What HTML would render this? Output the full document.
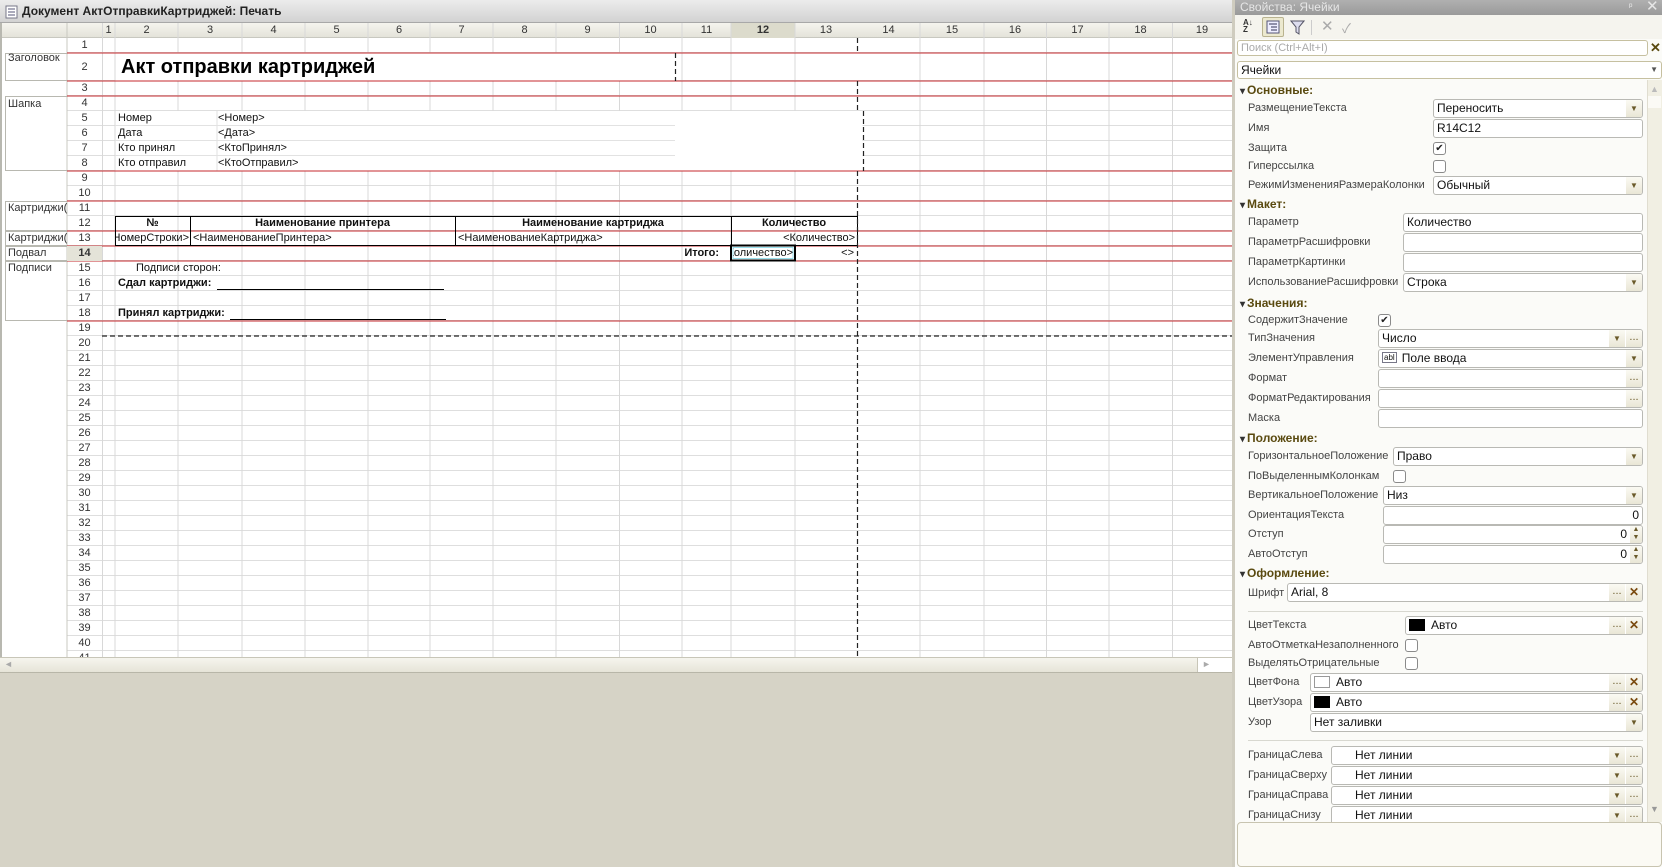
<!DOCTYPE html>
<html><head><meta charset="utf-8">
<style>
*{margin:0;padding:0;box-sizing:border-box}
body{width:1662px;height:867px;overflow:hidden;background:#d6d3c6;font-family:"Liberation Sans","Noto Sans CJK SC",sans-serif;position:relative}
.a{position:absolute;white-space:nowrap}
.s{font-size:11px;color:#111;line-height:15px}
.b{font-weight:bold}
.lab{position:absolute;left:1248px;font-size:11px;color:#444;line-height:16px;white-space:nowrap}
.hd{position:absolute;left:1240px;font-size:12px;font-weight:bold;color:#5a4a10;line-height:16px}
.hd:before{content:"▾";font-size:10px;color:#333;margin-right:2px}
.inp{position:absolute;height:19px;border:1px solid #b9b9b4;border-radius:3px;background:#fff;font-size:12px;line-height:17px;padding-left:3px;color:#111;right:19px;white-space:nowrap;overflow:hidden}
.dd{position:absolute;right:0;top:0;width:16px;height:17px;background:linear-gradient(#fbfaf3,#e9e6d6);font-size:8px;color:#6a5a2a;text-align:center;line-height:17px}
.dt{position:absolute;top:0;width:16px;height:17px;background:linear-gradient(#fbfaf3,#e9e6d6);font-size:11px;color:#6a5a2a;text-align:center;line-height:14px}
.x{position:absolute;right:0;top:0;width:16px;height:17px;background:linear-gradient(#fbfaf3,#e9e6d6);font-size:12px;font-weight:bold;color:#7a4a10;text-align:center;line-height:17px}
.cb{position:absolute;width:13px;height:13px;border:1px solid #8a8a8a;border-radius:3px;background:#fff;font-size:10px;line-height:11px;text-align:center;color:#222}
</style></head><body>
<div class="a" style="left:0;top:0;width:1232px;height:23px;background:linear-gradient(#ececec,#d2d2d2);border-bottom:1px solid #a8a8a8"></div>
<svg class="a" style="left:5px;top:5px" width="14" height="14"><rect x="1" y="1" width="11" height="12" fill="#fff" stroke="#778"/><path d="M3 4h7M3 7h7M3 10h7" stroke="#557" stroke-width="1"/></svg>
<div class="a b" style="left:22px;top:4px;font-size:12px;color:#222">Документ АктОтправкиКартриджей: Печать</div>

<div class="a" style="left:0;top:23px;width:1232px;height:634px;background:#fff;border-left:2px solid #b8b8b0"></div>
<div class="a" style="left:2px;top:23px;width:1230px;height:15px;background:linear-gradient(#f5f4ee,#e4e3da);border-bottom:1px solid #c8c8c0"></div>
<div class="a" style="left:731px;top:23px;width:64px;height:15px;background:#dcdbcc"></div>
<svg class="a" style="left:0;top:0" width="1232" height="657">
<defs><pattern id="rp" x="0" y="96" width="1232" height="15" patternUnits="userSpaceOnUse"><line x1="0" y1="14.5" x2="1232" y2="14.5" stroke="#dedede" stroke-width="1"/></pattern></defs>
<rect x="67" y="96" width="1165" height="561" fill="url(#rp)"/>
<g stroke="#dedede" stroke-width="1">
<line x1="67" y1="52.5" x2="1232" y2="52.5"/><line x1="67" y1="80.5" x2="1232" y2="80.5"/><line x1="67" y1="95.5" x2="1232" y2="95.5"/>
</g>
<g stroke="#d8d8d8" stroke-width="1">
<line x1="102.5" y1="23" x2="102.5" y2="657"/><line x1="115" y1="23" x2="115" y2="657"/><line x1="178" y1="23" x2="178" y2="657"/><line x1="242" y1="23" x2="242" y2="657"/><line x1="305" y1="23" x2="305" y2="657"/><line x1="368" y1="23" x2="368" y2="657"/><line x1="430" y1="23" x2="430" y2="657"/><line x1="493" y1="23" x2="493" y2="657"/><line x1="556" y1="23" x2="556" y2="657"/><line x1="619.5" y1="23" x2="619.5" y2="657"/><line x1="682" y1="23" x2="682" y2="657"/><line x1="731" y1="23" x2="731" y2="657"/><line x1="795" y1="23" x2="795" y2="657"/><line x1="920" y1="23" x2="920" y2="657"/><line x1="984" y1="23" x2="984" y2="657"/><line x1="1046.5" y1="23" x2="1046.5" y2="657"/><line x1="1109" y1="23" x2="1109" y2="657"/><line x1="1172.5" y1="23" x2="1172.5" y2="657"/>
<line x1="67" y1="23" x2="67" y2="657" stroke="#c8c8c0"/>
</g>
<rect x="115.5" y="53.5" width="559" height="27" fill="#fff"/>
<rect x="115.5" y="111" width="747" height="59.5" fill="#fff"/>
<g stroke="#e2e2e2"><line x1="115" y1="125.5" x2="675" y2="125.5"/><line x1="115" y1="140.5" x2="675" y2="140.5"/><line x1="115" y1="155.5" x2="675" y2="155.5"/><line x1="217" y1="111" x2="217" y2="171"/></g>
<g stroke="#b8b8b0" fill="none">
<path d="M67 53.5H5.5V80.5H67"/><path d="M67 96.5H5.5V170.5H67"/><path d="M67 201.5H5.5V230.5H67"/><path d="M67 231.5H5.5V245.5H67"/><path d="M67 246.5H5.5V260.5H67"/><path d="M67 261.5H5.5V320.5H67"/>
</g>
<g stroke="#c42a2e" stroke-width="1">
<line x1="67" y1="53" x2="1232" y2="53"/><line x1="67" y1="81" x2="1232" y2="81"/><line x1="67" y1="96" x2="1232" y2="96"/><line x1="67" y1="171" x2="1232" y2="171"/><line x1="67" y1="201" x2="1232" y2="201"/><line x1="67" y1="231" x2="1232" y2="231"/><line x1="67" y1="246" x2="1232" y2="246"/><line x1="67" y1="261" x2="1232" y2="261"/><line x1="67" y1="321" x2="1232" y2="321"/>
</g>
<rect x="115.5" y="216.5" width="742" height="29" fill="none" stroke="#000"/>
<g stroke="#000"><line x1="190.5" y1="216" x2="190.5" y2="246"/><line x1="455.5" y1="216" x2="455.5" y2="246"/><line x1="731.5" y1="216" x2="731.5" y2="246"/></g>
<g stroke="#222" stroke-dasharray="5,3" stroke-width="1.2">
<line x1="857.5" y1="38" x2="857.5" y2="53"/><line x1="857.5" y1="81" x2="857.5" y2="111"/><line x1="857.5" y1="171" x2="857.5" y2="657"/>
<line x1="675.5" y1="53" x2="675.5" y2="81"/><line x1="863.5" y1="111" x2="863.5" y2="171"/>
<line x1="102" y1="336" x2="1232" y2="336"/>
</g>
<g stroke="#000"><line x1="217" y1="289.5" x2="444" y2="289.5"/><line x1="230" y1="319.5" x2="446" y2="319.5"/></g>
<rect x="731" y="245.5" width="64" height="15" fill="none" stroke="#000" stroke-width="2"/>
<rect x="733" y="247.5" width="60" height="11" fill="none" stroke="#7fd8e8" stroke-width="0.8"/>
</svg>

<div class="a s" style="top:23px;left:102px;width:13px;text-align:center;color:#333">1</div>
<div class="a s" style="top:23px;left:115px;width:63px;text-align:center;color:#333">2</div>
<div class="a s" style="top:23px;left:178px;width:64px;text-align:center;color:#333">3</div>
<div class="a s" style="top:23px;left:242px;width:63px;text-align:center;color:#333">4</div>
<div class="a s" style="top:23px;left:305px;width:63px;text-align:center;color:#333">5</div>
<div class="a s" style="top:23px;left:368px;width:62px;text-align:center;color:#333">6</div>
<div class="a s" style="top:23px;left:430px;width:63px;text-align:center;color:#333">7</div>
<div class="a s" style="top:23px;left:493px;width:63px;text-align:center;color:#333">8</div>
<div class="a s" style="top:23px;left:556px;width:63px;text-align:center;color:#333">9</div>
<div class="a s" style="top:23px;left:619px;width:63px;text-align:center;color:#333">10</div>
<div class="a s" style="top:23px;left:682px;width:49px;text-align:center;color:#333">11</div>
<div class="a s b" style="top:23px;left:731px;width:64px;text-align:center;color:#333">12</div>
<div class="a s" style="top:23px;left:795px;width:62px;text-align:center;color:#333">13</div>
<div class="a s" style="top:23px;left:857px;width:63px;text-align:center;color:#333">14</div>
<div class="a s" style="top:23px;left:920px;width:64px;text-align:center;color:#333">15</div>
<div class="a s" style="top:23px;left:984px;width:62px;text-align:center;color:#333">16</div>
<div class="a s" style="top:23px;left:1046px;width:63px;text-align:center;color:#333">17</div>
<div class="a s" style="top:23px;left:1109px;width:63px;text-align:center;color:#333">18</div>
<div class="a s" style="top:23px;left:1172px;width:60px;text-align:center;color:#333">19</div>

<div class="a s" style="left:67px;width:35px;top:38px;text-align:center;color:#333;line-height:15px">1</div>
<div class="a s" style="left:67px;width:35px;top:53px;text-align:center;color:#333;line-height:28px">2</div>
<div class="a s" style="left:67px;width:35px;top:81px;text-align:center;color:#333;line-height:15px">3</div>
<div class="a s" style="left:67px;width:35px;top:96px;text-align:center;color:#333;line-height:15px">4<br>5<br>6<br>7<br>8<br>9<br>10<br>11<br>12<br>13<br><b>14</b><br>15<br>16<br>17<br>18<br>19<br>20<br>21<br>22<br>23<br>24<br>25<br>26<br>27<br>28<br>29<br>30<br>31<br>32<br>33<br>34<br>35<br>36<br>37<br>38<br>39<br>40<br>41</div>
<div class="a" style="left:67px;top:246px;width:35px;height:15px;background:#e4e3d8"></div>
<div class="a s b" style="left:67px;width:35px;top:246px;text-align:center;color:#333">14</div>

<div class="a s" style="left:8px;top:51px;color:#333">Заголовок</div>
<div class="a s" style="left:8px;top:97px;color:#333">Шапка</div>
<div class="a s" style="left:8px;top:201px;color:#333;width:59px;overflow:hidden">Картриджи(</div>
<div class="a s" style="left:8px;top:231px;color:#333;width:59px;overflow:hidden">Картриджи(</div>
<div class="a s" style="left:8px;top:246px;color:#333">Подвал</div>
<div class="a s" style="left:8px;top:261px;color:#333">Подписи</div>

<div class="a b" style="left:121px;top:55px;font-size:20px;color:#000;line-height:24px">Акт отправки картриджей</div>
<div class="a s" style="left:118px;top:111px">Номер</div><div class="a s" style="left:218px;top:111px">&lt;Номер&gt;</div>
<div class="a s" style="left:118px;top:126px">Дата</div><div class="a s" style="left:218px;top:126px">&lt;Дата&gt;</div>
<div class="a s" style="left:118px;top:141px">Кто принял</div><div class="a s" style="left:218px;top:141px">&lt;КтоПринял&gt;</div>
<div class="a s" style="left:118px;top:156px">Кто отправил</div><div class="a s" style="left:218px;top:156px">&lt;КтоОтправил&gt;</div>
<div class="a s b" style="left:115px;width:75px;top:216px;text-align:center">№</div>
<div class="a s b" style="left:190px;width:265px;top:216px;text-align:center">Наименование принтера</div>
<div class="a s b" style="left:455px;width:276px;top:216px;text-align:center">Наименование картриджа</div>
<div class="a s b" style="left:731px;width:126px;top:216px;text-align:center">Количество</div>
<div class="a s" style="left:116px;width:73px;top:231px;text-align:right;overflow:hidden;direction:rtl">&lt;НомерСтроки&gt;</div>
<div class="a s" style="left:193px;top:231px">&lt;НаименованиеПринтера&gt;</div>
<div class="a s" style="left:458px;top:231px">&lt;НаименованиеКартриджа&gt;</div>
<div class="a s" style="left:740px;width:115px;top:231px;text-align:right">&lt;Количество&gt;</div>
<div class="a s b" style="left:620px;width:99px;top:246px;text-align:right">Итого:</div>
<div class="a s" style="left:733px;width:60px;top:246px;overflow:hidden;text-align:right;direction:rtl">&lt;Количество&gt;</div>
<div class="a s" style="left:820px;width:34px;top:246px;text-align:right">&lt;&gt;</div>
<div class="a s" style="left:136px;top:261px">Подписи сторон:</div>
<div class="a s b" style="left:118px;top:276px">Сдал картриджи:</div>
<div class="a s b" style="left:118px;top:306px">Принял картриджи:</div>

<div class="a" style="left:0;top:657px;width:1232px;height:16px;background:linear-gradient(#f6f5ee,#e6e4d8);border-top:1px solid #c8c6b8;border-bottom:1px solid #b8b6a8"></div>
<div class="a" style="left:4px;top:659px;font-size:9px;color:#aaa">◄</div>
<div class="a" style="left:1197px;top:658px;width:35px;height:14px;background:#fff;border-left:1px solid #c8c6b8"></div>
<div class="a" style="left:1202px;top:659px;font-size:9px;color:#aaa">►</div>

<div class="a" style="left:1232px;top:0;width:430px;height:867px;background:#fbfbf8;border-left:3px solid #cfccbf"></div>
<div class="a" style="left:1235px;top:0;width:427px;height:15px;background:linear-gradient(#b0b0b0,#9a9a9a)"></div>
<div class="a" style="left:1240px;top:0;font-size:12px;color:#e6e6e6;line-height:15px">Свойства: Ячейки</div>
<div class="a" style="left:1629px;top:0;font-size:9px;color:#eee;line-height:13px">ᵖ</div>
<div class="a" style="left:1646px;top:-1px;font-size:15px;color:#e6e6e6;line-height:16px">✕</div>
<div class="a" style="left:1235px;top:15px;width:427px;height:24px;background:#f5f4ee"></div>
<div class="a" style="left:1243px;top:19px;font-size:8px;line-height:7px;color:#333;font-weight:bold">A↓<br>Z</div>
<div class="a" style="left:1262px;top:17px;width:22px;height:20px;border:1px solid #b9b38f;background:#ece9cf;border-radius:2px"></div>
<svg class="a" style="left:1266px;top:20px" width="15" height="15"><rect x="1" y="1" width="12" height="12" fill="#eef" stroke="#557" /><path d="M3 4h8M5 7h6M5 10h6" stroke="#335"/></svg>
<svg class="a" style="left:1290px;top:20px" width="15" height="15"><path d="M1 1h13l-5 6v7l-3-2V7z" fill="#dde" stroke="#556"/></svg>
<div class="a" style="left:1311px;top:20px;width:1px;height:15px;background:#ccc"></div>
<div class="a" style="left:1321px;top:17px;font-size:15px;color:#aaa">✕</div>
<div class="a" style="left:1342px;top:18px;font-size:13px;color:#aaa">✓</div>
<div class="a" style="left:1237px;top:40px;width:411px;height:16px;border:1px solid #c6c0a0;border-radius:3px;background:#fff;font-size:11px;color:#aaa;padding-left:3px;line-height:14px">Поиск (Ctrl+Alt+I)</div>
<div class="a b" style="left:1650px;top:40px;font-size:13px;color:#5a4a10">✕</div>
<div class="a" style="left:1237px;top:61px;width:425px;height:18px;border:1px solid #c6c0a0;border-radius:3px;background:#fff;font-size:12px;color:#111;padding-left:3px;line-height:16px">Ячейки<span style="position:absolute;right:3px;top:0;font-size:8px;color:#555">▼</span></div>
<div class="a" style="left:1647px;top:80px;width:15px;height:742px;background:#f1efe3;border-left:1px solid #e0ddd0"></div>
<div class="a" style="left:1650px;top:84px;font-size:9px;color:#bbb">▲</div>
<div class="a" style="left:1650px;top:804px;font-size:9px;color:#999">▼</div>
<div class="a" style="left:1648px;top:96px;width:13px;height:12px;background:#fbfaf5"></div>

<div class="hd" style="top:82px">Основные:</div>
<div class="lab" style="top:100px">РазмещениеТекста</div>
<div class="inp" style="left:1433px;top:99px">Переносить<div class="dd">▼</div></div>
<div class="lab" style="top:120px">Имя</div>
<div class="inp" style="left:1433px;top:119px">R14C12</div>
<div class="lab" style="top:140px">Защита</div>
<div class="cb" style="left:1433px;top:142px">✔</div>
<div class="lab" style="top:158px">Гиперссылка</div>
<div class="cb" style="left:1433px;top:160px"></div>
<div class="lab" style="top:177px">РежимИзмененияРазмераКолонки</div>
<div class="inp" style="left:1433px;top:176px">Обычный<div class="dd">▼</div></div>

<div class="hd" style="top:196px">Макет:</div>
<div class="lab" style="top:214px">Параметр</div>
<div class="inp" style="left:1403px;top:213px">Количество</div>
<div class="lab" style="top:234px">ПараметрРасшифровки</div>
<div class="inp" style="left:1403px;top:233px"></div>
<div class="lab" style="top:254px">ПараметрКартинки</div>
<div class="inp" style="left:1403px;top:253px"></div>
<div class="lab" style="top:274px">ИспользованиеРасшифровки</div>
<div class="inp" style="left:1403px;top:273px">Строка<div class="dd">▼</div></div>

<div class="hd" style="top:295px">Значения:</div>
<div class="lab" style="top:312px">СодержитЗначение</div>
<div class="cb" style="left:1378px;top:314px">✔</div>
<div class="lab" style="top:330px">ТипЗначения</div>
<div class="inp" style="left:1378px;top:329px">Число<div class="dd" style="right:17px">▼</div><div class="dt" style="right:0">...</div></div>
<div class="lab" style="top:350px">ЭлементУправления</div>
<div class="inp" style="left:1378px;top:349px"><span style="font-size:8px;border:1px solid #778;padding:0 1px;margin-right:5px;position:relative;top:-2px">abl</span>Поле ввода<div class="dd">▼</div></div>
<div class="lab" style="top:370px">Формат</div>
<div class="inp" style="left:1378px;top:369px"><div class="dt" style="right:0">...</div></div>
<div class="lab" style="top:390px">ФорматРедактирования</div>
<div class="inp" style="left:1378px;top:389px"><div class="dt" style="right:0">...</div></div>
<div class="lab" style="top:410px">Маска</div>
<div class="inp" style="left:1378px;top:409px"></div>

<div class="hd" style="top:430px">Положение:</div>
<div class="lab" style="top:448px">ГоризонтальноеПоложение</div>
<div class="inp" style="left:1393px;top:447px">Право<div class="dd">▼</div></div>
<div class="lab" style="top:468px">ПоВыделеннымКолонкам</div>
<div class="cb" style="left:1393px;top:470px"></div>
<div class="lab" style="top:487px">ВертикальноеПоложение</div>
<div class="inp" style="left:1383px;top:486px">Низ<div class="dd">▼</div></div>
<div class="lab" style="top:507px">ОриентацияТекста</div>
<div class="inp" style="left:1383px;top:506px;text-align:right;padding-right:3px">0</div>
<div class="lab" style="top:526px">Отступ</div>
<div class="inp" style="left:1383px;top:525px;text-align:right;padding-right:15px">0<div class="dd" style="width:12px;font-size:7px;line-height:8px">▲<br>▼</div></div>
<div class="lab" style="top:546px">АвтоОтступ</div>
<div class="inp" style="left:1383px;top:545px;text-align:right;padding-right:15px">0<div class="dd" style="width:12px;font-size:7px;line-height:8px">▲<br>▼</div></div>

<div class="hd" style="top:565px">Оформление:</div>
<div class="lab" style="top:585px">Шрифт</div>
<div class="inp" style="left:1287px;top:583px">Arial, 8<div class="dt" style="right:17px">...</div><div class="x">✕</div></div>
<div class="a" style="left:1248px;top:611px;width:395px;height:1px;background:#d8d8d0"></div>
<div class="lab" style="top:617px">ЦветТекста</div>
<div class="inp" style="left:1405px;top:616px"><span style="display:inline-block;width:16px;height:12px;background:#000;vertical-align:-2px;margin-right:6px"></span>Авто<div class="dt" style="right:17px">...</div><div class="x">✕</div></div>
<div class="lab" style="top:637px">АвтоОтметкаНезаполненного</div>
<div class="cb" style="left:1405px;top:639px"></div>
<div class="lab" style="top:655px">ВыделятьОтрицательные</div>
<div class="cb" style="left:1405px;top:657px"></div>
<div class="lab" style="top:674px">ЦветФона</div>
<div class="inp" style="left:1310px;top:673px"><span style="display:inline-block;width:16px;height:12px;background:#fff;border:1px solid #999;vertical-align:-2px;margin-right:6px"></span>Авто<div class="dt" style="right:17px">...</div><div class="x">✕</div></div>
<div class="lab" style="top:694px">ЦветУзора</div>
<div class="inp" style="left:1310px;top:693px"><span style="display:inline-block;width:16px;height:12px;background:#000;vertical-align:-2px;margin-right:6px"></span>Авто<div class="dt" style="right:17px">...</div><div class="x">✕</div></div>
<div class="lab" style="top:714px">Узор</div>
<div class="inp" style="left:1310px;top:713px">Нет заливки<div class="dd">▼</div></div>
<div class="a" style="left:1248px;top:740px;width:395px;height:1px;background:#d8d8d0"></div>
<div class="lab" style="top:747px">ГраницаСлева</div>
<div class="inp" style="left:1331px;top:746px;padding-left:23px">Нет линии<div class="dd" style="right:17px">▼</div><div class="dt" style="right:0">...</div></div>
<div class="lab" style="top:767px">ГраницаСверху</div>
<div class="inp" style="left:1331px;top:766px;padding-left:23px">Нет линии<div class="dd" style="right:17px">▼</div><div class="dt" style="right:0">...</div></div>
<div class="lab" style="top:787px">ГраницаСправа</div>
<div class="inp" style="left:1331px;top:786px;padding-left:23px">Нет линии<div class="dd" style="right:17px">▼</div><div class="dt" style="right:0">...</div></div>
<div class="lab" style="top:807px">ГраницаСнизу</div>
<div class="inp" style="left:1331px;top:806px;padding-left:23px">Нет линии<div class="dd" style="right:17px">▼</div><div class="dt" style="right:0">...</div></div>
<div class="a" style="left:1237px;top:822px;width:425px;height:45px;background:#fbfaf4;border:1px solid #c8c4b0;border-radius:4px"></div>
</body></html>
